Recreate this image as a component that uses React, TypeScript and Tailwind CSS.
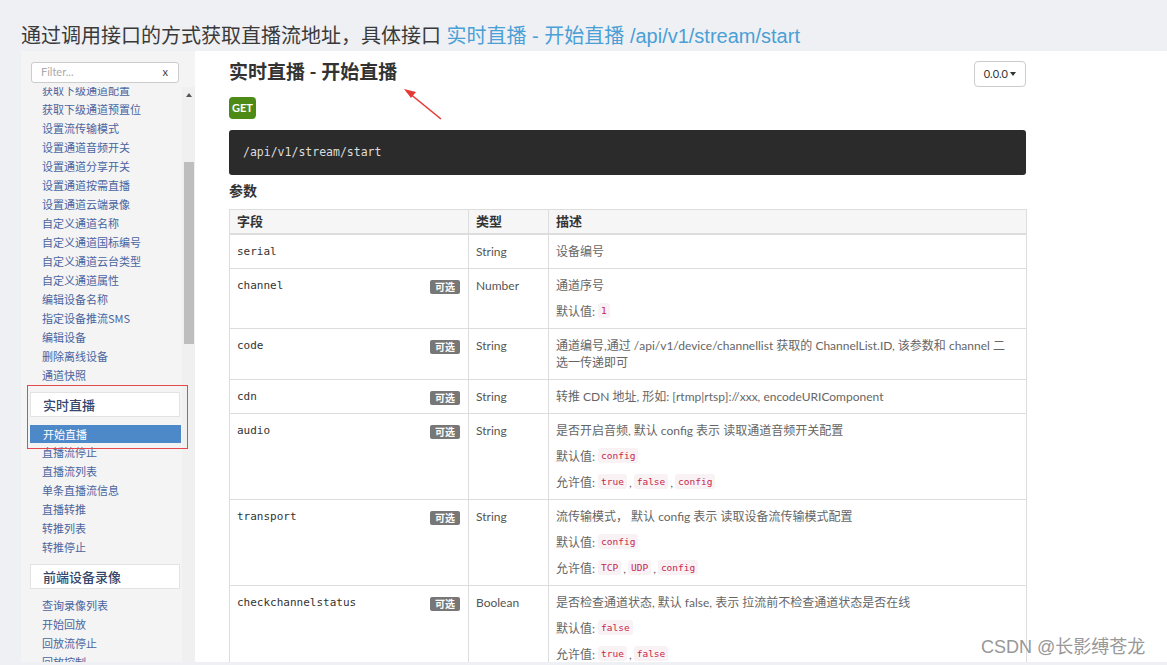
import React from 'react';

const topItems = ['获取下级通道配置','获取下级通道预置位','设置流传输模式','设置通道音频开关','设置通道分享开关','设置通道按需直播','设置通道云端录像','自定义通道名称','自定义通道国标编号','自定义通道云台类型','自定义通道属性','编辑设备名称','指定设备推流SMS','编辑设备','删除离线设备','通道快照'];
const liveItems = ['直播流停止','直播流列表','单条直播流信息','直播转推','转推列表','转推停止'];
const recItems = ['查询录像列表','开始回放','回放流停止','回放控制'];

const Item = ({ t }: { t: string }) => (
  <div className="h-[19px] leading-[19px] pl-[21px] text-[11px] text-[#4a64a0] whitespace-nowrap">{t}</div>
);

const Header = ({ t, mt }: { t: string; mt: string }) => (
  <div className={`${mt} ml-[9px] w-[150px] h-[25px] bg-white border border-[#e3e3e3] pl-[12px] leading-[23px] text-[13px] font-medium text-[#34466b]`}>{t}</div>
);

const Pill = ({ c }: { c: string }) => (
  <code className="inline-block h-[15px] leading-[15px] px-[3px] rounded-[3px] bg-[#f9f2f4] text-[#c7254e] text-[9.5px] align-top" style={{ fontFamily: '"DejaVu Sans Mono", monospace' }}>{c}</code>
);

const Opt = () => (
  <span className="mt-[3px] h-[14px] leading-[14px] px-[5px] rounded-[2px] bg-[#777] text-white text-[10px] font-bold shrink-0">可选</span>
);

type Row = { f: string; opt: boolean; type: string; desc: React.ReactNode[] };

const sep = <span className="mx-[2px]">,</span>;

const rows: Row[] = [
  { f: 'serial', opt: false, type: 'String', desc: ['设备编号'] },
  { f: 'channel', opt: true, type: 'Number', desc: ['通道序号', <>默认值: <Pill c="1" /></>] },
  { f: 'code', opt: true, type: 'String', desc: ['通道编号,通过 /api/v1/device/channellist 获取的 ChannelList.ID, 该参数和 channel 二选一传递即可'] },
  { f: 'cdn', opt: true, type: 'String', desc: ['转推 CDN 地址, 形如: [rtmp|rtsp]://xxx, encodeURIComponent'] },
  { f: 'audio', opt: true, type: 'String', desc: ['是否开启音频, 默认 config 表示 读取通道音频开关配置', <>默认值: <Pill c="config" /></>, <>允许值: <Pill c="true" />{sep}<Pill c="false" />{sep}<Pill c="config" /></>] },
  { f: 'transport', opt: true, type: 'String', desc: ['流传输模式， 默认 config 表示 读取设备流传输模式配置', <>默认值: <Pill c="config" /></>, <>允许值: <Pill c="TCP" />{sep}<Pill c="UDP" />{sep}<Pill c="config" /></>] },
  { f: 'checkchannelstatus', opt: true, type: 'Boolean', desc: ['是否检查通道状态, 默认 false, 表示 拉流前不检查通道状态是否在线', <>默认值: <Pill c="false" /></>, <>允许值: <Pill c="true" />{sep}<Pill c="false" /></>] },
];

export default function App() {
  const cjk = '"Noto Sans CJK SC", sans-serif';
  const main = 'Lato, "Noto Sans CJK SC", sans-serif';
  return (
    <div className="relative w-[1167px] h-[665px] bg-[#eff0f4] flex flex-col overflow-hidden" style={{ fontFamily: cjk }}>
      <div className="h-[51px] pl-[21px] pt-[22px] text-[20px] leading-[28px] text-[#3a3a3a] whitespace-nowrap" style={{ fontFamily: '"Liberation Sans", "Noto Sans CJK SC", sans-serif' }}>
        通过调用接口的方式获取直播流地址，具体接口 <span className="text-[#4a9fd6]">实时直播 - 开始直播 /api/v1/stream/start</span>
      </div>
      <div className="ml-[21px] h-[611px] flex">
        {/* Sidebar */}
        <div className="w-[174px] h-full bg-[#f4f4f4] flex flex-col">
          <div className="h-[36px] pt-[11px] pl-[10px]">
            <div className="w-[148px] h-[21px] bg-white border border-[#ccc] rounded-[3px] flex items-center justify-between pl-[9px] pr-[10px] text-[11px]">
              <span className="text-[#aaa]" style={{ fontFamily: main }}>Filter...</span>
              <span className="text-[#444]" style={{ fontFamily: main }}>x</span>
            </div>
          </div>
          <div className="relative flex-1 flex overflow-hidden">
            <div className="flex-1 -mt-[6px]">
              {topItems.map((t) => <Item key={t} t={t} />)}
              <Header t="实时直播" mt="mt-[7px]" />
              <div className="mt-[8px] ml-[9px] w-[151px] h-[18px] leading-[18px] pl-[13px] bg-[#4d88c9] text-white text-[11px]">开始直播</div>
              {liveItems.map((t) => <Item key={t} t={t} />)}
              <Header t="前端设备录像" mt="mt-[7px]" />
              <div className="mt-[7px]">
                {recItems.map((t) => <Item key={t} t={t} />)}
              </div>
            </div>
            <div className="w-[13px] h-full bg-[#f0f0f0] flex flex-col items-center">
              <div className="mt-[6px] w-0 h-0 border-l-[3px] border-r-[3px] border-b-[4px] border-l-transparent border-r-transparent border-b-[#555]" />
              <div className="mt-[65px] w-[10px] h-[182px] bg-[#bebebe]" />
            </div>
            <div className="absolute left-[6px] top-[298px] w-[161px] h-[64px] border border-[#e5484d] pointer-events-none" />
          </div>
        </div>
        {/* Main */}
        <div className="relative flex-1 h-full bg-white overflow-hidden pl-[34px] pt-[10px]" style={{ fontFamily: main }}>
          <div className="w-[797px]">
            <div className="flex justify-between items-start h-[26px]">
              <div className="text-[19px] leading-[22px] font-bold text-[#333]">实时直播 - 开始直播</div>
              <div className="h-[26px] px-[9px] border border-[#ccc] rounded-[4px] flex items-center gap-[2px] text-[11px] text-[#333]">
                <span>0.0.0</span>
                <span className="w-0 h-0 border-l-[3px] border-r-[3px] border-t-[4px] border-l-transparent border-r-transparent border-t-[#333]" />
              </div>
            </div>
            <div className="mt-[10px] w-[27px] h-[22px] rounded-[4px] bg-[#4e8b16] text-white text-[11px] font-bold flex items-center justify-center">GET</div>
            <div className="mt-[11px] h-[45px] rounded-[3px] bg-[#2b2b2b] flex items-center pl-[14px] text-[11.5px] text-[#ddd]" style={{ fontFamily: '"DejaVu Sans Mono", monospace' }}>/api/v1/stream/start</div>
            <div className="mt-[6px] text-[14px] leading-[20px] font-bold text-[#333]">参数</div>
            <table className="mt-[8px] w-[797px] table-fixed border-collapse border border-[#ddd]">
              <colgroup>
                <col className="w-[239px]" />
                <col className="w-[80px]" />
                <col className="w-[478px]" />
              </colgroup>
              <thead>
                <tr className="bg-[#f6f6f6] text-left text-[13px] font-bold text-[#333]">
                  <th className="border border-[#ddd] border-b-2 pl-[7px] h-[24px] leading-[17px]">字段</th>
                  <th className="border border-[#ddd] border-b-2 pl-[7px] leading-[17px]">类型</th>
                  <th className="border border-[#ddd] border-b-2 pl-[7px] leading-[17px]">描述</th>
                </tr>
              </thead>
              <tbody>
                {rows.map((r) => (
                  <tr key={r.f} className="align-top">
                    <td className="border border-[#ddd] pl-[7px] pr-[8px] pt-[8px] pb-[8px]">
                      <div className="flex justify-between items-start">
                        <span className="text-[11px] leading-[17px] text-[#333]" style={{ fontFamily: '"DejaVu Sans Mono", monospace' }}>{r.f}</span>
                        {r.opt && <Opt />}
                      </div>
                    </td>
                    <td className="border border-[#ddd] pl-[7px] pt-[8px] pb-[8px] text-[12px] leading-[17px] text-[#555]">{r.type}</td>
                    <td className="border border-[#ddd] pl-[7px] pr-[10px] pt-[8px] pb-[8px] text-[12px] leading-[17px] text-[#666]">
                      <div className="flex flex-col gap-[9px]">
                        {r.desc.map((d, i) => <div key={i} className="min-h-[17px]">{d}</div>)}
                      </div>
                    </td>
                  </tr>
                ))}
              </tbody>
            </table>
          </div>
          <svg className="absolute left-[200px] top-[30px] pointer-events-none" width="60" height="50" viewBox="0 0 60 50">
            <line x1="46" y1="38" x2="14" y2="12" stroke="#e53935" strokeWidth="1.6" />
            <polygon points="9,8 21,11 16,17" fill="#e53935" />
          </svg>
        </div>
      </div>
      <div className="absolute left-[981px] top-[634px] text-[18px] leading-[26px] text-[#8d8d8d] opacity-90 whitespace-nowrap" style={{ fontFamily: '"Liberation Sans", "Noto Sans CJK SC", sans-serif' }}>CSDN @长影缚苍龙</div>
    </div>
  );
}
